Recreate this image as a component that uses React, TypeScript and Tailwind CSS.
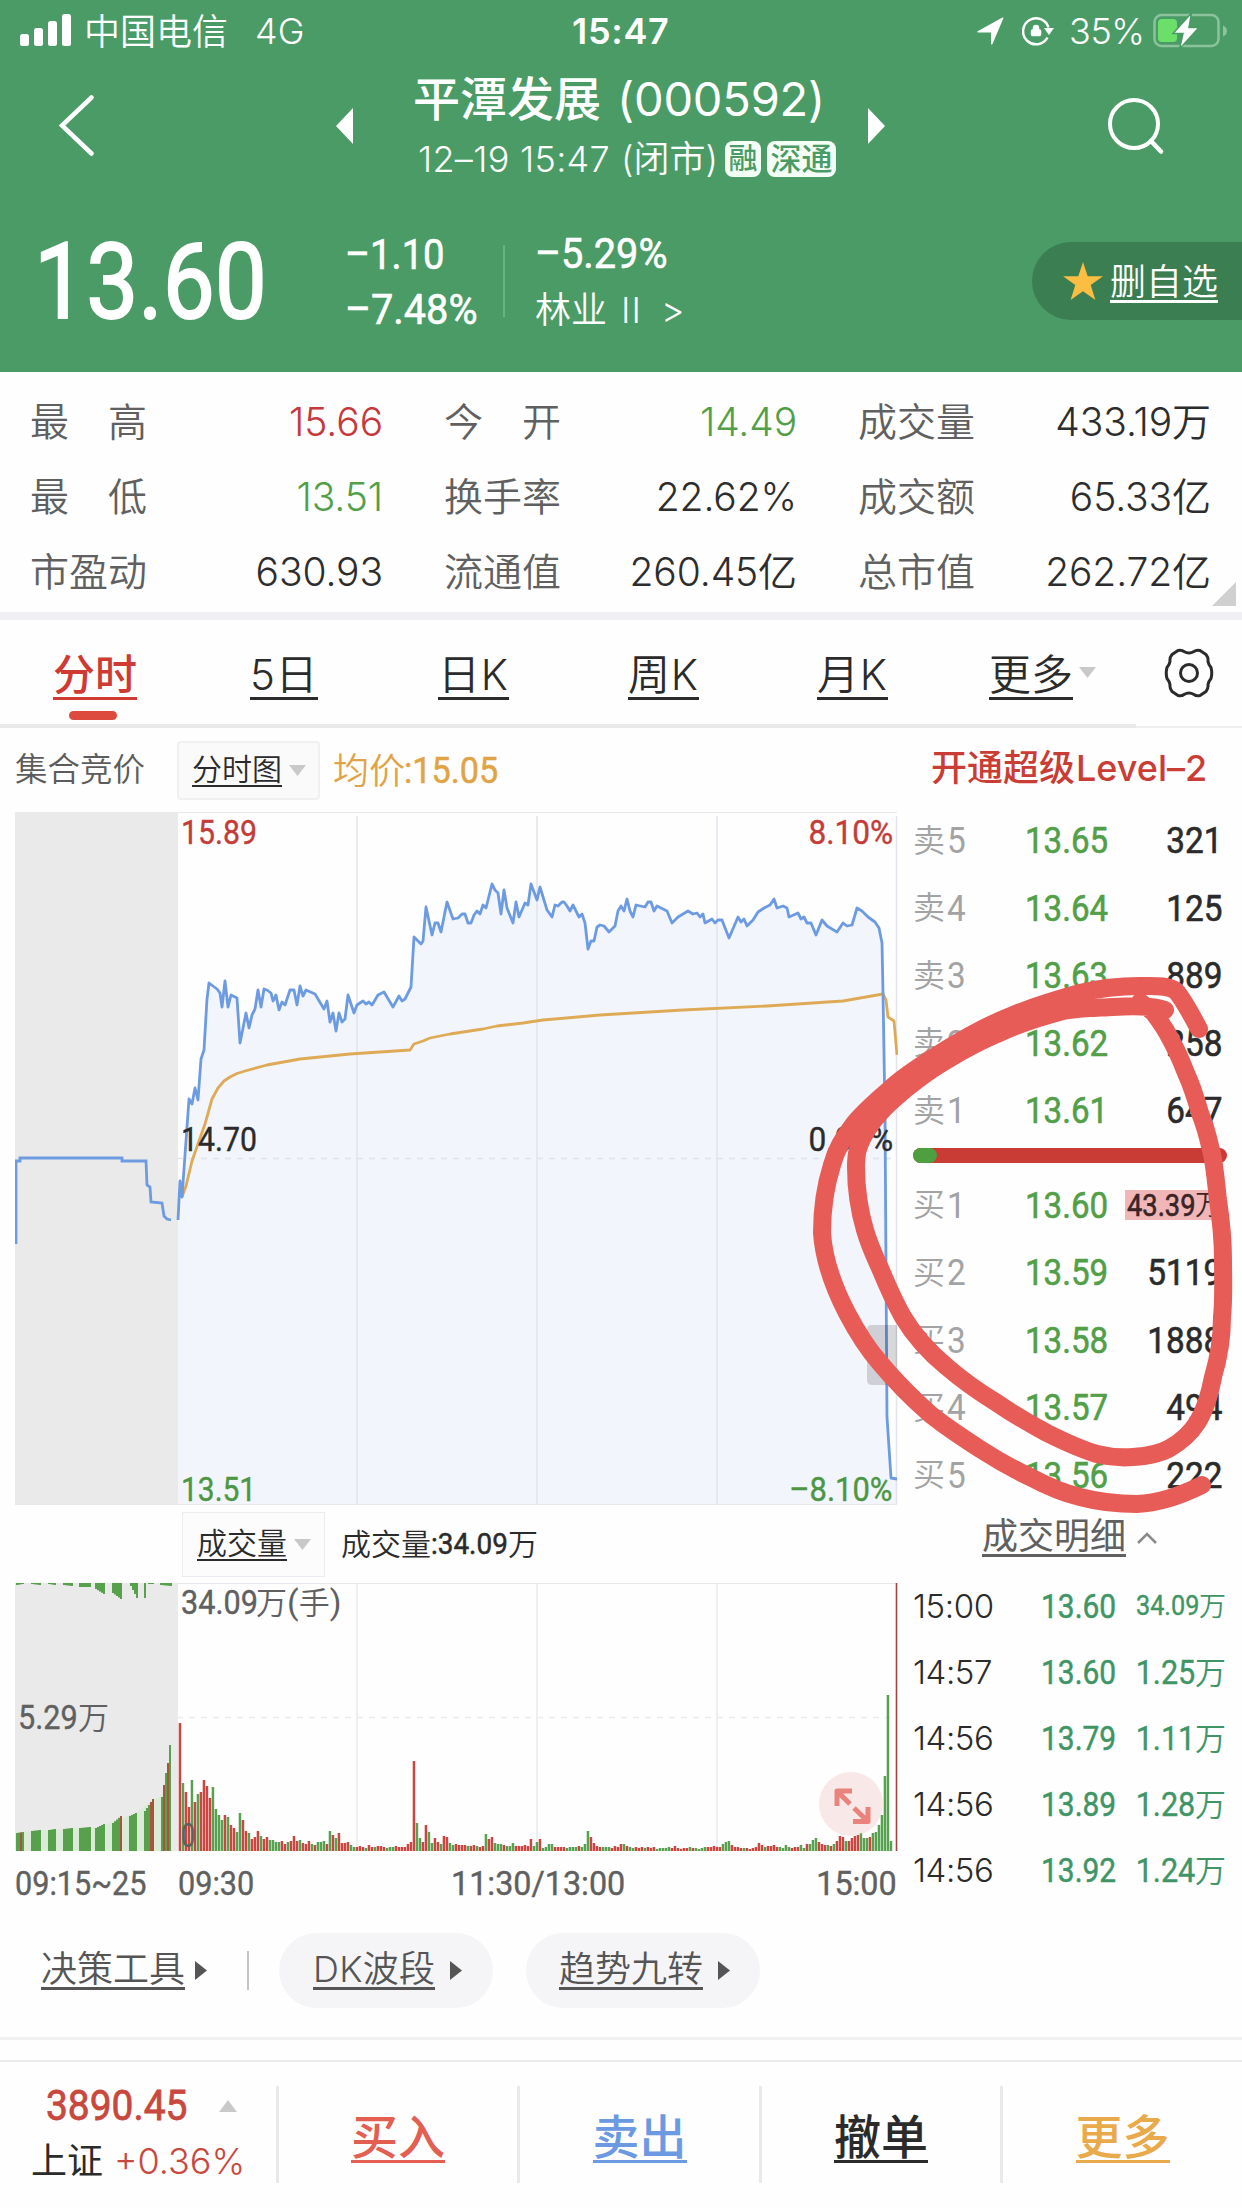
import React from 'react';
import { Lock } from 'lucide-react';

const STATS = [
  [
    { label: '最　高', value: '15.66', color: 'text-[#c5383b]' },
    { label: '今　开', value: '14.49', color: 'text-[#529f48]' },
    { label: '成交量', value: '433.19万', color: 'text-[#2d2d2d]' },
  ],
  [
    { label: '最　低', value: '13.51', color: 'text-[#529f48]' },
    { label: '换手率', value: '22.62%', color: 'text-[#2d2d2d]' },
    { label: '成交额', value: '65.33亿', color: 'text-[#2d2d2d]' },
  ],
  [
    { label: '市盈动', value: '630.93', color: 'text-[#2d2d2d]' },
    { label: '流通值', value: '260.45亿', color: 'text-[#2d2d2d]' },
    { label: '总市值', value: '262.72亿', color: 'text-[#2d2d2d]' },
  ],
];

const SELLS = [
  ['卖5', '13.65', '321'],
  ['卖4', '13.64', '125'],
  ['卖3', '13.63', '889'],
  ['卖2', '13.62', '258'],
  ['卖1', '13.61', '647'],
];

const BUYS = [
  ['买1', '13.60', '43.39万'],
  ['买2', '13.59', '5119'],
  ['买3', '13.58', '1888'],
  ['买4', '13.57', '494'],
  ['买5', '13.56', '222'],
];

const TRADES = [
  ['15:00', '13.60', '34.09万'],
  ['14:57', '13.60', '1.25万'],
  ['14:56', '13.79', '1.11万'],
  ['14:56', '13.89', '1.28万'],
  ['14:56', '13.92', '1.24万'],
];

const AUCTION_LINE =
  '16,1244 16,1161 20,1161 20,1158 122,1158 122,1161 146,1161 147,1185 150,1187 151,1202 162,1203 164,1216 167,1219 171,1220';

const PRICE_LINE =
  '178,1220 180,1181 182,1197 189,1099 192,1104 195,1088 198,1100 201,1059 204,1050 207,999 209,983 217,989 220,993 222,1007 225,981 228,1007 231,995 237,998 240,1043 246,1013 249,1028 252,1015 255,1009 258,990 261,1007 264,989 267,990 271,993 273,1001 276,995 279,1010 282,1002 285,1005 287,999 290,990 294,990 297,1005 300,986 303,996 306,990 315,994 324,1009 327,1001 330,1022 333,1013 336,1031 339,1013 342,1022 345,1019 348,995 354,1013 357,1005 363,1001 366,1004 369,1002 372,1005 378,995 384,992 393,1007 399,996 402,1001 405,999 411,987 414,937 421,944 423,941 426,907 432,935 435,923 438,923 441,932 447,902 453,919 458,918 462,914 465,914 468,923 471,923 474,915 477,911 480,914 483,905 486,908 492,884 495,890 498,893 501,914 504,890 507,908 513,923 516,902 519,917 525,903 528,905 531,884 537,900 540,887 547,910 552,917 555,905 558,906 562,902 564,902 567,906 570,911 573,905 579,917 582,914 585,923 588,949 591,941 594,941 597,927 600,925 604,926 609,932 615,926 618,911 621,906 624,911 627,899 630,911 633,917 636,905 645,907 648,902 651,902 654,911 657,906 667,911 672,923 678,917 683,914 688,911 693,914 697,913 700,917 703,914 705,923 712,919 715,923 718,920 722,920 729,938 738,917 741,922 744,919 747,926 753,920 758,912 764,908 770,905 774,899 777,908 783,906 787,908 789,917 798,913 801,919 804,917 807,923 811,923 816,935 822,920 827,926 837,932 843,923 847,926 852,925 857,908 862,911 868,917 875,922 879,928 882,943 883,993 885,1113 886,1267 887,1417 891,1478 897,1479';

const AVG_LINE =
  '182,1197 186,1186 192,1161 199,1141 205,1124 212,1099 218,1088 224,1081 230,1077 237,1073.500 245,1071 267,1065 300,1059 350,1054 410,1050 414,1044 423,1041 430,1038 450,1034 483,1029 497,1026 523,1023 543,1020 600,1015 683,1010 767,1006 843,1001 883,994 886,1000 888,1017 894,1021 897,1055';

// one bar per minute, r = up, g = down
const VOLUMES = `
r128 g68 r59 r44 g71 r49 g57 r59 r71 r65 r53 g64 g42 g36 g31 r36 g34 r26 r23 g19
g38 r31 r20 g18 r12 r14 r20 g15 r12 r14 g11 g11 g9 g9 r10 r7 g9 r10 r15 r10
g11 r8 r7 r10 g7 r6 g9 g9 g10 r7 g20 r16 g13 r18 r8 r8 r9 g6 g4 r4
r5 r4 g3 r6 r4 g4 r5 r5 r4 g3 g4 g4 r5 r4 r4 r4 r7 r9 r90 g28
g13 r9 r26 g19 g8 r13 r9 g7 r15 r14 g8 g6 r7 r6 r6 r6 g5 r5 r6 g5
r4 r5 g17 r12 r14 g8 g7 g7 r6 g5 g5 g8 r5 r5 r5 r6 r5 r12 g5 g9
r12 g3 g4 g7 g7 r4 r4 r4 r4 g3 g4 g4 g4 r5 g4 g7 g20 r14 r8 r5
r4 g4 g4 g4 r3 r5 r4 r7 g7 r5 g4 g3 r4 r3 r4 g3 r4 r3 r4 g2
g3 g3 g3 g4 r3 r5 r3 r2 r3 r3 g4 r3 g3 g2 g3 g4 r4 r4 r5 r4
r4 g7 g9 g10 r6 r4 r4 r3 g3 r3 r2 r3 r4 r8 r6 g4 r5 r5 r6 r4
g4 g3 g6 g4 r3 r4 r4 g6 g3 r7 g7 g11 g13 r9 r7 r6 g6 r5 g7 r10
r15 r14 g10 r10 r13 r15 r16 g18 g13 g13 r14 g18 g19 g26 g36 g75 g156 g10`
  .trim()
  .split(/\s+/)
  .map((s) => ({ up: s[0] === 'r', h: Number(s.slice(1)) }));

// call auction: [x from, x to, height from, height to]
const AUCTION_BOTTOM = [
  [16, 24, 18, 19],
  [31, 41, 20, 21],
  [48, 56, 21, 22],
  [63, 73, 22, 23],
  [79, 90, 23, 24],
  [95, 105, 23, 27],
  [112, 122, 28, 35],
  [129, 137, 35, 38],
  [144, 154, 40, 52],
  [161, 167, 54, 78],
  [167, 169, 88, 88],
  [169, 171, 106, 106],
];
const AUCTION_TOP = [
  [16, 24, 2, 1],
  [31, 41, 1, 2],
  [48, 56, 1, 2],
  [63, 73, 2, 3],
  [79, 90, 4, 4],
  [95, 105, 6, 11],
  [112, 121, 10, 16],
  [130, 137, 3, 15],
  [144, 145, 15, 15],
  [148, 153, 1, 1],
  [160, 171, 2, 3],
];

const spread = (groups: number[][]) =>
  groups.flatMap(([x0, x1, h0, h1]) => {
    const n = Math.max(1, Math.round((x1 - x0) / 2));
    return Array.from({ length: n }, (_, i) => ({
      x: x0 + i * 2,
      h: h0 + ((h1 - h0) * i) / Math.max(1, n - 1),
    }));
  });

const RED_BARS = [20, 120, 150, 152, 163, 167];

type TextProps = { className?: string; children: React.ReactNode };

// condensed digits used for quotes
const Num: React.FC<TextProps> = ({ className = '', children }) => (
  <span
    className={`inline-block whitespace-nowrap leading-none [font-family:Roboto,'Noto_Sans_CJK_SC',sans-serif] ${className}`}
  >
    {children}
  </span>
);

const CaretDown: React.FC<{ className?: string }> = ({ className = '' }) => (
  <svg className={`h-[11px] w-[17px] shrink-0 ${className}`} viewBox="0 0 17 11">
    <path d="M0 0h17L8.500 11z" fill="#c9c9c9" />
  </svg>
);

const CaretRight: React.FC<{ className?: string }> = ({ className = '' }) => (
  <svg className={`h-[19px] w-[12px] shrink-0 ${className}`} viewBox="0 0 12 19">
    <path d="M0 0v19l12-9.500z" fill="#555" />
  </svg>
);

const StatusBar = () => (
  <div className="flex h-[62px] items-center whitespace-nowrap text-[36px] leading-none">
    <svg className="ml-[20px] h-[34px] w-[52px] shrink-0" viewBox="0 0 52 34" fill="#fff">
      <rect x="0" y="20" width="9" height="12" rx="2.500" />
      <rect x="14" y="14" width="9" height="18" rx="2.500" />
      <rect x="28" y="7" width="9" height="25" rx="2.500" />
      <rect x="42" y="0" width="9" height="32" rx="2.500" />
    </svg>
    <span className="ml-[12px] w-[171px] shrink-0 pt-px [font-weight:350]">中国电信</span>
    <span className="w-[317px] shrink-0 text-[36px] [font-weight:350]">4G</span>
    <span className="w-[405px] shrink-0 text-[36px] font-semibold tracking-[0.700px]">15:47</span>
    <svg className="h-[28px] w-[27px] shrink-0" viewBox="0 0 27 28">
      <path d="M26.500 1 15.500 27q-.7 1-1.500 0V15.500H1q-1.500-.6 0-1.600L25.500.5q1-.2 1 .5z" fill="#fff" />
    </svg>
    <span className="relative ml-[18px] h-[30px] w-[32px] shrink-0">
      <svg className="h-[30px] w-[32px]" viewBox="0 0 32 30" fill="none">
        <path d="M25.500 21.500A13 13 0 1 1 26.500 11.500" stroke="#fff" strokeWidth="2.500" />
        <path d="M22 12h10l-5 7z" fill="#fff" />
      </svg>
      <Lock className="absolute left-[8px] top-[7px] h-[15px] w-[12px] fill-white" strokeWidth={3} />
    </span>
    <span className="ml-[15px] w-[84px] shrink-0 text-[36px] tracking-[-0.400px] [font-weight:350]">35%</span>
    <svg className="h-[36px] w-[76px] shrink-0" viewBox="0 0 76 36">
      <rect x="1.500" y="2" width="64" height="31" rx="7" fill="none" stroke="#8cc39d" strokeWidth="2.500" />
      <rect x="5" y="6" width="19" height="23" rx="4" fill="#6bdf6a" />
      <path d="M70 12.500q4 1.500 4 5.500t-4 5.500z" fill="#8cc39d" />
      <path d="M38.500 0 20 20.500h10L26.500 36 46 14.500H36z" fill="#fff" stroke="#4a9b65" strokeWidth="1.500" />
    </svg>
  </div>
);

const Header = () => (
  <header className="h-[372px] bg-[#4a9b65] text-white">
    <StatusBar />

    <div className="flex h-[128px]">
      <div className="flex w-[336px] items-center pl-[59px]">
        <svg className="h-[62px] w-[36px]" viewBox="0 0 36 62" fill="none">
          <path d="M32.500 2.500 3 30.500l29.500 28" stroke="#fff" strokeWidth="4.500" strokeLinecap="round" />
        </svg>
      </div>
      <svg className="h-[128px] w-[17px]" viewBox="0 0 17 128">
        <path d="M17 46v36L0 64z" fill="#fff" />
      </svg>
      <div className="w-[515px] pt-[9px]">
        <div className="flex h-[55px] items-center pl-[60px] text-[47px] font-medium leading-none">
          <span className="w-[204px] shrink-0">平潭发展</span>
          <span className="whitespace-nowrap font-normal tracking-[-0.200px]">(000592)</span>
        </div>
        <div className="flex h-[65px] items-center pl-[65px] text-[36px] leading-none [font-weight:350]">
          <span className="w-[203px] shrink-0 whitespace-nowrap tracking-[0.300px]">12–19 15:47</span>
          <span className="w-[104px] shrink-0 whitespace-nowrap text-[36px]">(闭市)</span>
          <span className="flex h-[36px] w-[36px] shrink-0 items-center justify-center rounded-[8px] bg-[#f3fff6] text-[29px] font-medium text-[#4a9b65]">
            融
          </span>
          <span className="ml-[6px] flex h-[36px] w-[69px] shrink-0 items-center justify-center rounded-[8px] bg-[#f3fff6] text-[31px] font-medium text-[#4a9b65]">
            深通
          </span>
        </div>
      </div>
      <svg className="h-[128px] w-[17px]" viewBox="0 0 17 128">
        <path d="M0 46v36L17 64z" fill="#fff" />
      </svg>
      <svg className="ml-[222px] mt-[34px] h-[60px] w-[60px]" viewBox="0 0 60 60" fill="none">
        <circle cx="27" cy="28" r="24" stroke="#fff" strokeWidth="4" />
        <path d="m44 45 10 10.500" stroke="#fff" strokeWidth="4.500" strokeLinecap="round" />
      </svg>
    </div>

    <div className="flex h-[182px] items-center">
      <div className="w-[345px] shrink-0 pl-[34px] pt-[2px]">
        <Num className="origin-left scale-x-[0.875] text-[106px] font-normal [-webkit-text-stroke:2px_white]">13.60</Num>
      </div>
      <div className="w-[158px] shrink-0 pt-[3px]">
        <div className="flex h-[55px] items-center">
          <Num className="origin-left scale-x-[0.91] text-[42px] [-webkit-text-stroke:0.6px]">–1.10</Num>
        </div>
        <div className="flex h-[55px] items-center">
          <Num className="origin-left scale-x-[0.945] text-[42px] [-webkit-text-stroke:0.6px]">–7.48%</Num>
        </div>
      </div>
      <div className="h-[72px] w-[2px] bg-[#69b381]" />
      <div className="ml-[30px] w-[300px] pt-[3px]">
        <div className="flex h-[55px] items-center">
          <Num className="origin-left scale-x-[0.945] text-[42px] [-webkit-text-stroke:0.6px]">–5.29%</Num>
        </div>
        <div className="flex h-[57px] items-center text-[36px] leading-none [font-weight:350]">
          <span className="w-[86px]">林业</span>
          <span className="w-[40px] tracking-[1px]">II</span>
          <span>&gt;</span>
        </div>
      </div>
      <div className="ml-auto flex h-[78px] w-[210px] items-center rounded-l-full bg-[#3a7e52] pl-[31px]">
        <svg className="h-[38px] w-[40px]" viewBox="0 0 40 38">
          <path d="m20 0 4.700 14.200H40L27.700 23l4.700 15L20 29.200 7.600 38l4.700-15L0 14.200h15.300z" fill="#fbbd42" />
        </svg>
        <span className="ml-[7px] mt-[5px] border-b-[3px] border-white text-[36px] leading-none [font-weight:350]">
          删自选
        </span>
      </div>
    </div>
  </header>
);

const Stats = () => (
  <section className="relative flex h-[240px] flex-col pt-[12px] text-[39px] leading-none [font-weight:350]">
    {STATS.map((row, i) => (
      <div key={i} className="flex h-[75px] items-center gap-[61px] pl-[30px]">
        {row.map((s) => (
          <div key={s.label} className="flex w-[353px] shrink-0 items-center justify-between whitespace-nowrap">
            <span className="text-[#606060]">{s.label}</span>
            <span className={`tracking-[-0.100px] ${s.color}`}>{s.value}</span>
          </div>
        ))}
      </div>
    ))}
    <svg className="absolute bottom-[6px] right-[6px] h-[24px] w-[24px]" viewBox="0 0 24 24">
      <path d="M24 0v24H0z" fill="#d0d0d0" />
    </svg>
  </section>
);

const Tabs = () => (
  <nav className="flex h-[104px] text-[42px] leading-none text-[#2b2b2b] [font-weight:350]">
    <div className="flex w-[250px] flex-col pl-[53px] pt-[34px]">
      <span className="w-[84px] border-b-[3px] border-[#cf3a33] pb-px font-medium text-[#cf3a33]">分时</span>
      <span className="ml-[16px] mt-[11px] h-[9px] w-[48px] rounded-full bg-[#dd4b3e]" />
    </div>
    <div className="w-[188px] pt-[34px]">
      <span className="inline-block border-b-[3px] border-current pb-px tracking-[0.500px]">5日</span>
    </div>
    <div className="w-[190px] pt-[34px]">
      <span className="inline-block border-b-[3px] border-current pb-px tracking-[0.800px]">日K</span>
    </div>
    <div className="w-[189px] pt-[34px]">
      <span className="inline-block border-b-[3px] border-current pb-px tracking-[0.800px]">周K</span>
    </div>
    <div className="w-[172px] pt-[34px]">
      <span className="inline-block border-b-[3px] border-current pb-px tracking-[0.800px]">月K</span>
    </div>
    <div className="flex w-[175px] pt-[34px]">
      <span className="h-[46px] border-b-[3px] border-current">更多</span>
      <CaretDown className="ml-[6px] mt-[13px]" />
    </div>
    <svg className="mt-[28px] h-[50px] w-[50px]" viewBox="0 0 50 50" fill="none" stroke="#2b2b2b" strokeWidth="3">
      <path
        d="M14 2.500q3.500-1 6 1 5 3 10 0 2.500-2 6-1l6 4q2.500 3 2 7 .5 3 3 6 1.500 5.500 0 11-2.500 3-3 6 .5 4-2 7l-6 4q-3.500 1-6-1-5-3-10 0-2.500 2-6 1l-6-4q-2.500-3-2-7-.5-3-3-6-1.500-5.500 0-11 2.500-3 3-6-.5-4 2-7z"
        strokeLinejoin="round"
      />
      <circle cx="25" cy="25" r="8.500" />
    </svg>
  </nav>
);

const PriceChart = () => (
  <div className="relative h-[693px] w-[883px] [-webkit-text-stroke:0.4px]">
    <svg className="h-[693px] w-[883px]" viewBox="15 812 883 693" fill="none">
      <rect x="15" y="812" width="163" height="693" fill="#eaeaea" />
      <polygon points={`${PRICE_LINE} 897,1504 178,1504`} fill="#f2f5fc" />
      <path d="M177 812.500H897M15 1504.500H897" stroke="#e8e8ec" />
      <path d="M357 816V1504M537 816V1504M717 816V1504M896.500 816V1504" stroke="#e2e4ec" strokeWidth="1.500" />
      <path d="M177 1158.500H897" stroke="#e2e4ec" strokeWidth="1.500" strokeDasharray="6 6" />
      <polyline points={AVG_LINE} stroke="#dfaa55" strokeWidth="2.800" strokeLinejoin="round" />
      <polyline points={AUCTION_LINE} stroke="#6c9be2" strokeWidth="2.800" />
      <polyline points={PRICE_LINE} stroke="#6c9be2" strokeWidth="2.800" strokeLinejoin="round" />
      <path d="M897 1325h-25q-5 0-5 5v50q0 5 5 5h25z" fill="#00000026" />
    </svg>
    <Num className="absolute left-[166px] top-[3px] origin-left scale-x-[0.89] text-[34px] text-[#c33c38]">15.89</Num>
    <Num className="absolute left-[166px] top-[310px] origin-left scale-x-[0.89] text-[34px] text-[#2b2b2b]">14.70</Num>
    <Num className="absolute left-[166px] top-[660px] origin-left scale-x-[0.88] text-[34px] text-[#4c9644]">13.51</Num>
    <Num className="absolute right-[5px] top-[3px] origin-right scale-x-[0.93] text-[34px] text-[#c33c38]">8.10%</Num>
    <Num className="absolute right-[5px] top-[310px] origin-right scale-x-[0.93] text-[34px] text-[#2b2b2b]">0.00%</Num>
    <Num className="absolute right-[5px] top-[660px] origin-right scale-x-[0.91] text-[34px] text-[#4c9644]">–8.10%</Num>
  </div>
);

const VolumeChart = () => (
  <div className="relative h-[268px] w-[883px]">
    <svg className="h-[268px] w-[883px]" viewBox="15 1583 883 268" fill="none">
      <rect x="15" y="1583" width="163" height="268" fill="#eaeaea" />
      <polygon points="16,1851 16,1832 100,1827 137,1812 154,1799 162,1796 167,1772 170,1851" fill="#dcebd8" />
      <path d="M15 1583.500H897" stroke="#e8e8ec" />
      <path d="M357 1583V1850M537 1583V1850M717 1583V1850" stroke="#e9e9ec" strokeWidth="1.500" />
      <path d="M177 1717.500H890" stroke="#ececec" strokeWidth="1.500" strokeDasharray="6 6" />
      {spread(AUCTION_TOP).map((b) => (
        <rect key={`t${b.x}`} x={b.x} y={1583} width="2" height={b.h} fill="#57a04c" />
      ))}
      {spread(AUCTION_BOTTOM).map((b, i) => (
        <rect
          key={`b${i}`}
          x={b.x}
          y={1851 - b.h}
          width="2"
          height={b.h}
          fill={RED_BARS.includes(b.x) ? '#a8553f' : '#57a04c'}
        />
      ))}
      {VOLUMES.map((v, i) => (
        <rect key={i} x={178.700 + i * 3} y={1851 - v.h} width="2.500" height={v.h} fill={v.up ? '#cc4641' : '#56a24f'} />
      ))}
      <path d="M896.500 1583V1851" stroke="#a5443f" strokeWidth="1.600" />
    </svg>
    <Num className="absolute left-[166px] top-[2px] flex items-center text-[34px] text-[#606060]">
      <span className="inline-block w-[75px] origin-left scale-x-[0.9] [-webkit-text-stroke:0.4px]">34.09</span>
      <span className="text-[31px] [font-weight:350]">万</span>
      <span>(</span>
      <span className="text-[31px] [font-weight:350]">手</span>
      <span>)</span>
    </Num>
    <Num className="absolute left-[3px] top-[117px] flex items-center text-[34px] text-[#606060]">
      <span className="inline-block w-[60px] origin-left scale-x-[0.9] [-webkit-text-stroke:0.4px]">5.29</span>
      <span className="text-[31px] [font-weight:350]">万</span>
    </Num>
    <Num className="absolute left-[166px] top-[235px] origin-left scale-x-[0.75] text-[34px] text-[#606060]">0</Num>
    <div className="absolute left-[804px] top-[189px] h-[64px] w-[64px] rounded-full bg-[#f3c9c7]/40">
      <svg className="h-[64px] w-[64px]" viewBox="0 0 64 64" fill="none" stroke="#ea837b" strokeWidth="5">
        <path d="M18 34V19h15M18.500 19.500 31 32M49 35v14.500H34M48.500 49 35 36" strokeLinejoin="round" />
      </svg>
    </div>
  </div>
);

const ChartColumn = () => (
  <div className="w-[883px] shrink-0">
    <div className="flex h-[84px] items-center pt-px">
      <span className="w-[162px] text-[32.500px] leading-none text-[#5c5c5c] [font-weight:350]">集合竞价</span>
      <div className="flex h-[59px] w-[143px] items-center rounded-[4px] border-2 border-[#f0f0f2] bg-[#fafafa] pl-[13px]">
        <span className="border-b-2 border-[#2b2b2b] pb-px text-[30px] leading-none text-[#2b2b2b] [font-weight:350]">
          分时图
        </span>
        <CaretDown className="ml-[7px]" />
      </div>
      <div className="ml-[13px] flex items-center whitespace-nowrap text-[36px] leading-none text-[#e0a447] [font-weight:350]">
        <span className="w-[71px] shrink-0">均价</span>
        <Num className="origin-left scale-x-[0.95] text-[36px] font-normal [-webkit-text-stroke:0.5px]">:15.05</Num>
      </div>
    </div>
    <PriceChart />
    <div className="flex h-[78px] items-center text-[30px] leading-none text-[#2b2b2b] [font-weight:350]">
      <div className="ml-[167px] flex h-[65px] w-[143px] items-center border border-[#ebebf0] bg-[#fcfcfd] pl-[14px]">
        <span className="border-b-2 border-[#2b2b2b] pb-px">成交量</span>
        <CaretDown className="ml-[7px]" />
      </div>
      <span className="ml-[16px] w-[90px] whitespace-nowrap">成交量</span>
      <Num className="w-[77px] origin-left scale-x-[0.93] text-[30px] font-normal [-webkit-text-stroke:0.5px]">:34.09</Num>
      <span>万</span>
    </div>
    <VolumeChart />
    <div className="flex h-[64px] items-center text-[34px] text-[#606060] [-webkit-text-stroke:0.4px]">
      <Num className="w-[163px] origin-left scale-x-[0.9]">09:15~25</Num>
      <Num className="w-[273px] origin-left scale-x-[0.9]">09:30</Num>
      <Num className="w-[220px] origin-left scale-x-[0.95]">11:30/13:00</Num>
      <Num className="ml-auto mr-px origin-right scale-x-[0.95]">15:00</Num>
    </div>
  </div>
);

const BookRow: React.FC<{ row: string[] }> = ({ row: [name, price, count] }) => (
  <div className="flex h-[67.500px] items-center whitespace-nowrap">
    <span className="flex w-[112px] shrink-0 items-center text-[32px] leading-none text-[#a3a3a3] [font-weight:350]">
      <span className="w-[34px]">{name[0]}</span>
      <Num className="origin-left scale-x-[0.9] text-[37px] font-normal">{name[1]}</Num>
    </span>
    <Num className="w-[90px] shrink-0 origin-left scale-x-[0.895] text-[37px] text-[#529f48] [-webkit-text-stroke:0.6px]">
      {price}
    </Num>
    <span className="flex flex-1 justify-end pr-[5px]">
      {count.endsWith('万') ? (
        <span className="mr-[-4px] flex h-[30px] w-[101px] shrink-0 items-center bg-[#f0b6b8] pl-[2px] text-[#3a2425]">
          <Num className="w-[68px] origin-left scale-x-[0.88] text-[31px] [-webkit-text-stroke:0.6px]">
            {count.slice(0, -1)}
          </Num>
          <span className="text-[28px] leading-none [font-weight:350]">万</span>
        </span>
      ) : (
        <Num className="origin-right scale-x-[0.9] text-[37px] text-[#2b2b2b] [-webkit-text-stroke:0.6px]">{count}</Num>
      )}
    </span>
  </div>
);

const BookColumn = () => (
  <div className="ml-[15px] w-[314px] shrink-0">
    <div className="flex h-[79px] items-center whitespace-nowrap pl-[18px] text-[36px] font-medium leading-none text-[#c93d35]">
      <span className="w-[145px] shrink-0">开通超级</span>
      <span className="[font-weight:450]">Level–2</span>
    </div>
    {SELLS.map((r) => (
      <BookRow key={r[0]} row={r} />
    ))}
    <div className="mb-[4px] mt-[3px] flex h-[15px] overflow-hidden rounded-full bg-[#c93b35]">
      <div className="w-[24px] rounded-r-full bg-[#4d9f40]" />
    </div>
    <div className="pt-[5px]">
      {BUYS.map((r) => (
        <BookRow key={r[0]} row={r} />
      ))}
    </div>
    <div className="flex h-[57px] items-center pl-[69px]">
      <span className="border-b-[3px] border-[#606060] text-[36px] leading-none text-[#606060]">成交明细</span>
      <svg className="ml-[11px] h-[12px] w-[20px]" viewBox="0 0 20 12" fill="none">
        <path d="m1 11 9-9 9 9" stroke="#8a8a8a" strokeWidth="2.500" />
      </svg>
    </div>
    <div className="pt-[7px]">
      {TRADES.map(([time, price, vol], i) => (
        <div key={i} className="flex h-[66px] items-center whitespace-nowrap leading-none text-[#3f9566]">
          <span className="w-[128px] shrink-0 text-[33px] tracking-[-0.400px] text-[#2b2b2b] [font-weight:350]">
            {time}
          </span>
          <Num className="w-[80px] shrink-0 origin-left scale-x-[0.88] text-[34px] [-webkit-text-stroke:0.5px]">
            {price}
          </Num>
          <span className="mr-px flex flex-1 items-center justify-end">
            <Num
              className={`origin-right scale-x-[0.9] [-webkit-text-stroke:0.4px] ${i === 0 ? 'text-[28px]' : 'text-[34px]'}`}
            >
              {vol.slice(0, -1)}
            </Num>
            <span className={`[font-weight:350] ${i === 0 ? 'text-[27px]' : 'text-[31px]'}`}>万</span>
          </span>
        </div>
      ))}
    </div>
  </div>
);

// hand drawn marker around the order book
const Marker = () => (
  <svg
    className="pointer-events-none absolute left-[800px] top-[960px] h-[570px] w-[442px]"
    viewBox="800 960 442 570"
    fill="none"
    stroke="#e75c56"
    strokeWidth="18"
    strokeLinecap="round"
    strokeLinejoin="round"
  >
    <path d="M1199 1029C1190 1012 1183 999 1176 991C1168 985 1155 986 1140 986C1118 986 1100 988 1080 993C1055 1000 1035 1006 1013 1015C990 1024 968 1036 947 1049C925 1063 906 1074 890 1089C875 1102 863 1112 853 1125C842 1140 836 1150 832 1165C824 1190 822 1213 822 1233C824 1262 834 1288 847 1313C857 1332 867 1348 880 1363C896 1382 913 1399 930 1414C946 1427 963 1438 980 1449C997 1460 1013 1469 1030 1477C1047 1486 1063 1493 1080 1497C1099 1502 1118 1504 1137 1504C1160 1503 1180 1496 1202 1485" />
    <path d="M1165 1010C1150 1005 1130 1006 1113 1007C1095 1008 1080 1008 1063 1011C1040 1017 1018 1024 997 1034C978 1042 962 1051 947 1060C930 1070 918 1079 907 1088C893 1100 878 1112 867 1130C857 1146 856 1155 856 1167C856 1190 860 1213 865 1230C870 1247 875 1257 880 1268C887 1285 894 1301 903 1317C915 1337 930 1353 947 1367C962 1380 979 1392 997 1403C1013 1414 1030 1424 1047 1433C1063 1441 1080 1449 1097 1454C1109 1457 1121 1458 1133 1457C1147 1456 1160 1454 1170 1448C1182 1441 1190 1434 1197 1423C1206 1409 1210 1393 1213 1377C1219 1357 1222 1337 1222 1317C1224 1298 1223 1279 1223 1260C1223 1240 1221 1220 1218 1200C1216 1183 1215 1166 1211 1150C1208 1137 1205 1125 1200 1113C1196 1099 1192 1086 1186 1073C1181 1060 1177 1051 1171 1040C1166 1030 1160 1021 1153 1012L1140 1002" />
    <path d="M1070 1001L1010 1021" />
  </svg>
);

const Tools = () => (
  <section className="flex h-[122px] items-center pb-[11px] text-[36px] leading-none text-[#555] [font-weight:350]">
    <span className="ml-[41px] border-b-[3px] border-current">决策工具</span>
    <CaretRight className="ml-[10px]" />
    <span className="ml-[40px] h-[39px] w-[2px] bg-[#c4c4c4]" />
    <div className="ml-[30px] flex h-[75px] w-[214px] items-center rounded-full bg-[#f5f5f8] pl-[34px]">
      <span className="border-b-[3px] border-current tracking-[0.300px]">DK波段</span>
      <CaretRight className="ml-[15px]" />
    </div>
    <div className="ml-[33px] flex h-[75px] w-[234px] items-center rounded-full bg-[#f5f5f8] pl-[33px]">
      <span className="border-b-[3px] border-current">趋势九转</span>
      <CaretRight className="ml-[15px]" />
    </div>
  </section>
);

const BottomBar = () => (
  <footer className="flex h-[147px] items-center border-t-2 border-[#ececec] text-[47px] leading-none">
    <div className="h-full w-[276px] pt-[17px]">
      <div className="flex h-[53px] items-center pl-[46px]">
        <Num className="w-[173px] origin-left scale-x-[0.905] text-[43px] text-[#c9483d] [-webkit-text-stroke:0.8px]">
          3890.45
        </Num>
        <svg className="h-[12px] w-[18px]" viewBox="0 0 18 12">
          <path d="M9 0l9 12H0z" fill="#c9c9c9" />
        </svg>
      </div>
      <div className="flex h-[58px] items-center pl-[31px] text-[36px]">
        <span className="w-[83px] font-normal text-[#2b2b2b]">上证</span>
        <span className="whitespace-nowrap text-[#c9483d] [font-weight:350]">+0.36%</span>
      </div>
    </div>
    <div className="h-[97px] w-[3px] bg-[#e9e9e9]" />
    <div className="flex w-[238px] justify-center pt-[7px]">
      <span className="border-b-[3px] border-current font-medium text-[#e25f52]">买入</span>
    </div>
    <div className="h-[97px] w-[3px] bg-[#e9e9e9]" />
    <div className="flex w-[239px] justify-center pt-[7px]">
      <span className="border-b-[3px] border-current font-medium text-[#6b9ae2]">卖出</span>
    </div>
    <div className="h-[97px] w-[3px] bg-[#e9e9e9]" />
    <div className="flex w-[238px] justify-center pt-[7px]">
      <span className="border-b-[3px] border-current font-medium text-[#2b2b2b]">撤单</span>
    </div>
    <div className="h-[97px] w-[3px] bg-[#e9e9e9]" />
    <div className="flex w-[239px] justify-center pt-[7px]">
      <span className="border-b-[3px] border-current font-medium text-[#e9aa4c]">更多</span>
    </div>
  </footer>
);

const App: React.FC = () => {
  return (
    <div className="relative h-[2208px] w-[1242px] overflow-hidden bg-[#fefefe] [font-family:Inter,'Noto_Sans_CJK_SC',sans-serif]">
      <Header />
      <Stats />
      <div className="h-[8px] bg-[#f0f0f4]" />
      <Tabs />
      <div className="flex h-[4px] items-end">
        <div className="h-[4px] w-[1136px] bg-[#e9e9e9]" />
        <div className="h-[2px] flex-1 bg-[#efefef]" />
      </div>
      <div className="flex h-[1187px] pl-[15px]">
        <ChartColumn />
        <BookColumn />
      </div>
      <Tools />
      <div className="h-[3px] bg-[#f0f0f0]" />
      <div className="h-[20px]" />
      <BottomBar />
      <Marker />
    </div>
  );
};

export default App;
